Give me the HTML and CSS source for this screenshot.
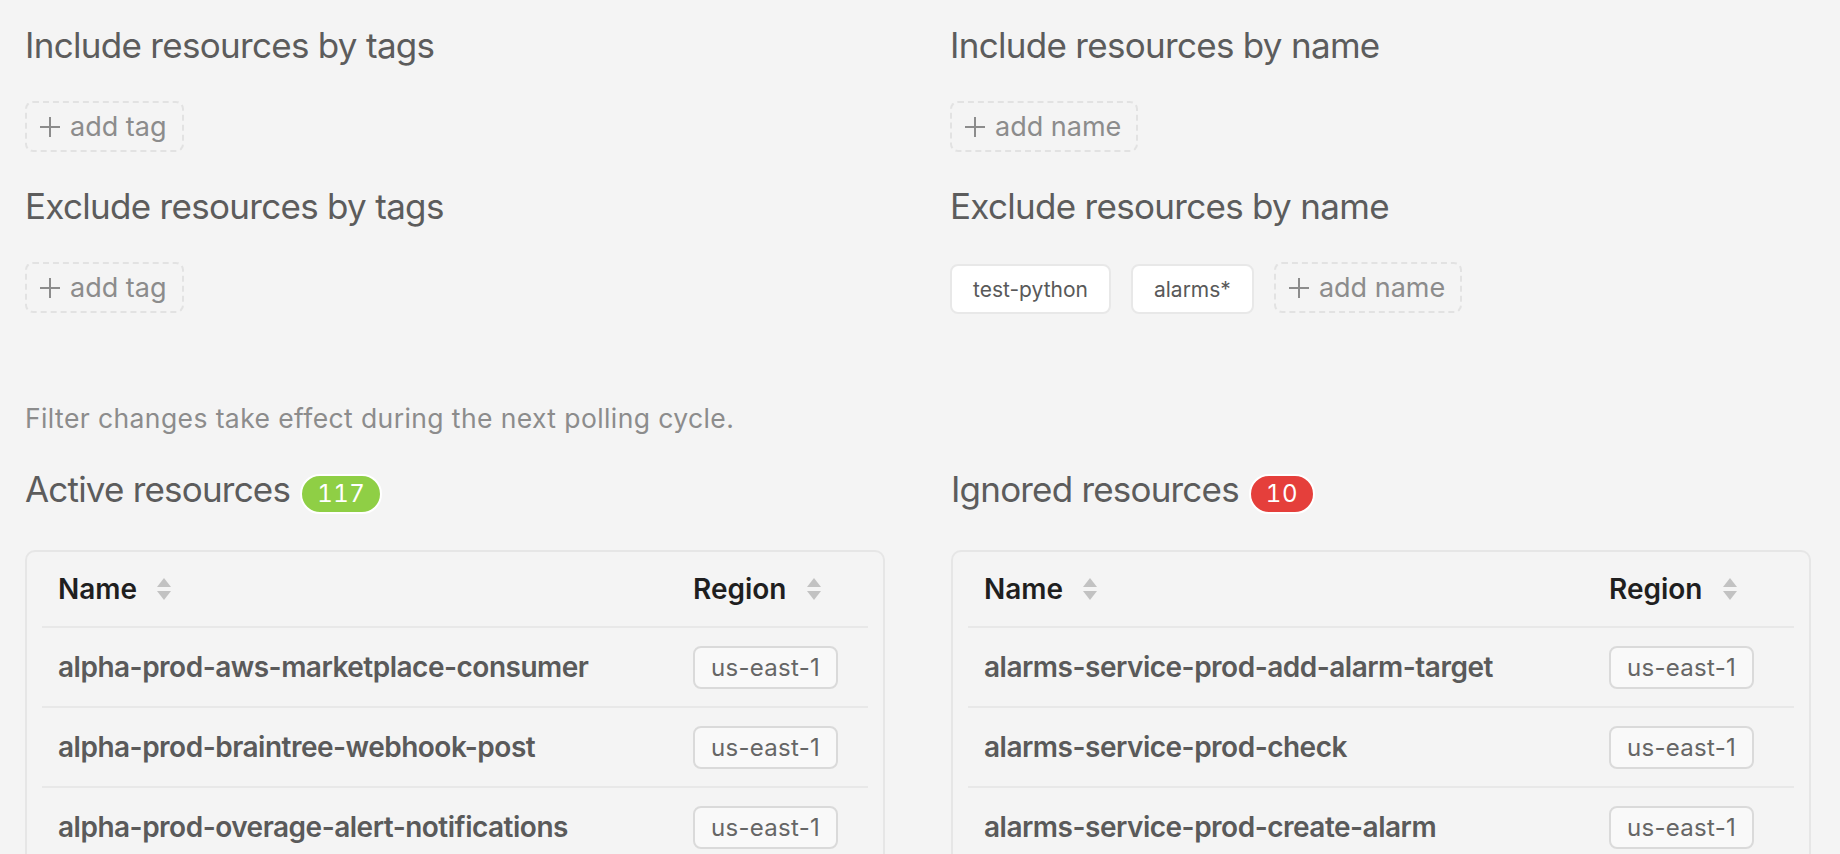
FILE: index.html
```html
<!DOCTYPE html>
<html lang="en">
<head>
<meta charset="utf-8">
<title>Resource filters</title>
<link rel="stylesheet" href="styles.css">
</head>
<body>
<main class="page">
  <section class="filters">
    <div class="filter-col">
      <div class="group">
        <h2 class="group-title">Include resources by tags</h2>
        <div class="tag-row">
          <button class="add-btn"><svg class="plus" viewBox="0 0 22 22"><path d="M11 1v20M1 11h20"/></svg>add tag</button>
        </div>
      </div>
      <div class="group">
        <h2 class="group-title">Exclude resources by tags</h2>
        <div class="tag-row">
          <button class="add-btn"><svg class="plus" viewBox="0 0 22 22"><path d="M11 1v20M1 11h20"/></svg>add tag</button>
        </div>
      </div>
    </div>
    <div class="filter-col">
      <div class="group">
        <h2 class="group-title">Include resources by name</h2>
        <div class="tag-row">
          <button class="add-btn"><svg class="plus" viewBox="0 0 22 22"><path d="M11 1v20M1 11h20"/></svg>add name</button>
        </div>
      </div>
      <div class="group">
        <h2 class="group-title">Exclude resources by name</h2>
        <div class="tag-row">
          <span class="chip">test-python</span>
          <span class="chip">alarms*</span>
          <button class="add-btn"><svg class="plus" viewBox="0 0 22 22"><path d="M11 1v20M1 11h20"/></svg>add name</button>
        </div>
      </div>
    </div>
  </section>

  <p class="note">Filter changes take effect during the next polling cycle.</p>

  <section class="resources">
    <div class="panel active">
      <h2 class="panel-title"><span>Active resources</span><span class="badge badge-green">117</span></h2>
      <div class="card">
        <table class="res-table">
          <colgroup><col><col class="col-region"></colgroup>
          <thead>
            <tr>
              <th><span class="th-inner">Name <svg class="sort" viewBox="0 0 16 26"><path d="M8 2 L15 11 L1 11 Z"/><path d="M1 15 L15 15 L8 24 Z"/></svg></span></th>
              <th><span class="th-inner">Region <svg class="sort" viewBox="0 0 16 26"><path d="M8 2 L15 11 L1 11 Z"/><path d="M1 15 L15 15 L8 24 Z"/></svg></span></th>
            </tr>
          </thead>
          <tbody>
            <tr><td>alpha-prod-aws-marketplace-consumer</td><td><span class="region">us-east-1</span></td></tr>
            <tr><td>alpha-prod-braintree-webhook-post</td><td><span class="region">us-east-1</span></td></tr>
            <tr><td>alpha-prod-overage-alert-notifications</td><td><span class="region">us-east-1</span></td></tr>
          </tbody>
        </table>
      </div>
    </div>
    <div class="panel ignored">
      <h2 class="panel-title"><span>Ignored resources</span><span class="badge badge-red">10</span></h2>
      <div class="card">
        <table class="res-table">
          <colgroup><col><col class="col-region"></colgroup>
          <thead>
            <tr>
              <th><span class="th-inner">Name <svg class="sort" viewBox="0 0 16 26"><path d="M8 2 L15 11 L1 11 Z"/><path d="M1 15 L15 15 L8 24 Z"/></svg></span></th>
              <th><span class="th-inner">Region <svg class="sort" viewBox="0 0 16 26"><path d="M8 2 L15 11 L1 11 Z"/><path d="M1 15 L15 15 L8 24 Z"/></svg></span></th>
            </tr>
          </thead>
          <tbody>
            <tr><td>alarms-service-prod-add-alarm-target</td><td><span class="region">us-east-1</span></td></tr>
            <tr><td>alarms-service-prod-check</td><td><span class="region">us-east-1</span></td></tr>
            <tr><td>alarms-service-prod-create-alarm</td><td><span class="region">us-east-1</span></td></tr>
          </tbody>
        </table>
      </div>
    </div>
  </section>
</main>
</body>
</html>
```

FILE: styles.css
```css
html, body {
  margin: 0;
  height: 100%;
  overflow: hidden;
  background: #f4f4f4;
}
body {
  font-family: Inter, "Noto Sans", "Liberation Sans", sans-serif;
  color: #5c5c5c;
}
.page {
  padding: 23px 0 0 25px;
}
.filters {
  display: grid;
  grid-template-columns: 860px 860px;
  column-gap: 65px;
}
.filter-col {
  display: flex;
  flex-direction: column;
  gap: 32px;
}
.group-title {
  margin: 0 0 34px;
  font-size: 35px;
  letter-spacing: -0.7px;
  line-height: 44px;
  font-weight: 400;
  color: #5c5c5c;
}
.tag-row {
  display: flex;
  align-items: center;
  gap: 20px;
  height: 51px;
}
.add-btn {
  display: inline-flex;
  align-items: center;
  gap: 9px;
  height: 51px;
  box-sizing: border-box;
  padding: 0 15px 0 12px;
  border: 2px dashed #e2e2e2;
  border-radius: 8px;
  background: transparent;
  font-family: inherit;
  font-size: 27px;
  color: #8c8c8c;
}
.plus {
  width: 22px;
  height: 22px;
  stroke: #8c8c8c;
  stroke-width: 2;
  fill: none;
}
.chip {
  display: inline-flex;
  align-items: center;
  height: 50px;
  box-sizing: border-box;
  margin-top: 3px;
  padding: 0 21px;
  border: 2px solid #e8e8e8;
  border-radius: 8px;
  background: #fff;
  font-size: 21px;
  color: #595959;
}
.note {
  margin: 87px 0 0;
  font-size: 26.5px;
  letter-spacing: 0.4px;
  line-height: 36px;
  color: #8c8c8c;
}
.resources {
  display: grid;
  grid-template-columns: 860px 860px;
  column-gap: 66px;
  margin-top: 31px;
}
.panel-title {
  display: flex;
  align-items: baseline;
  gap: 10px;
  height: 44px;
  margin: 0 0 39px;
  font-size: 35px;
  letter-spacing: -0.8px;
  line-height: 44px;
  font-weight: 400;
  color: #5c5c5c;
}
.badge {
  display: inline-block;
  height: 40px;
  box-sizing: border-box;
  padding: 0 15px;
  border: 2px solid #fff;
  border-radius: 20px;
  font-size: 24px;
  letter-spacing: 0.5px;
  font-variant-numeric: tabular-nums;
  line-height: 36px;
  color: #fff;
}
.badge-green { background: #8fcf45; }
.badge-red { background: #e53f3b; }
.card {
  border: 2px solid #e6e6e6;
  border-radius: 10px;
  padding: 0 15px;
}
.res-table {
  width: 100%;
  table-layout: fixed;
  border-collapse: collapse;
}
.active .col-region { width: 191px; }
.ignored .col-region { width: 201px; }
.res-table th {
  height: 74px;
  padding: 0 16px;
  text-align: left;
  font-size: 28px;
  font-weight: 600;
  color: #1f1f1f;
  border-bottom: 2px solid #e8e8e8;
}
.th-inner {
  display: inline-flex;
  align-items: center;
  gap: 19px;
}
.sort {
  width: 16px;
  height: 26px;
  fill: #c2c2c2;
}
.res-table td {
  height: 78px;
  padding: 0 16px;
  font-size: 28px;
  font-weight: 580;
  letter-spacing: -0.5px;
  color: #5a5a5a;
  border-bottom: 2px solid #e8e8e8;
  white-space: nowrap;
}
.region {
  display: inline-block;
  height: 43px;
  box-sizing: border-box;
  padding: 0 16px;
  border: 2px solid #dadada;
  border-radius: 8px;
  background: #f9f9f9;
  font-size: 24px;
  font-weight: 400;
  letter-spacing: 0.3px;
  line-height: 39px;
  color: #666;
}
```
